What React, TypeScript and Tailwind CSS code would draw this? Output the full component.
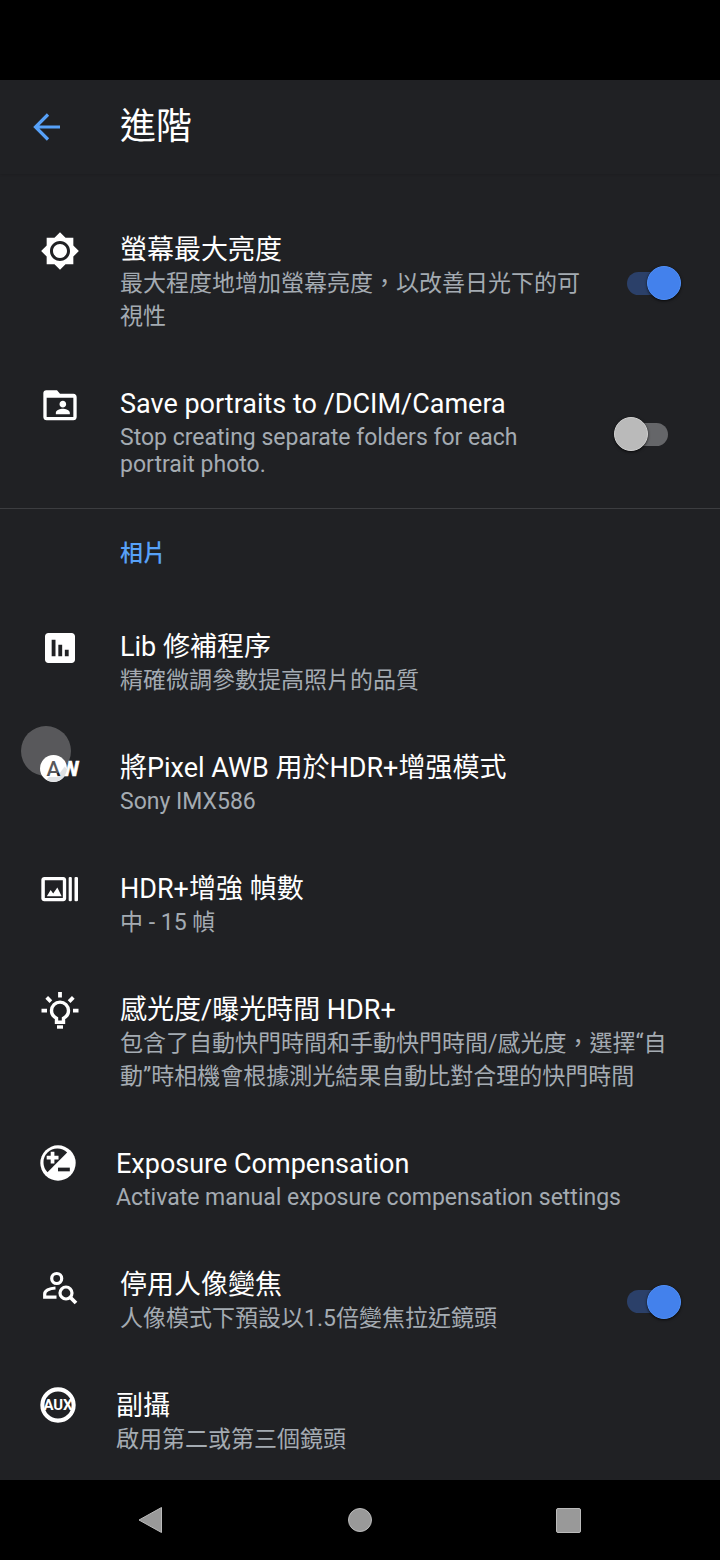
import { useState } from "react";
import type { ReactNode } from "react";
import clsx from "clsx";

type Setting = {
  id: string;
  title: string;
  summary: string;
  icon: ReactNode;
  latin?: boolean;
  toggle?: boolean;
};

function Glyph({ d }: { d: string }) {
  return (
    <svg viewBox="0 0 24 24" className="size-10 fill-white" aria-hidden="true">
      <path d={d} />
    </svg>
  );
}

function AwIcon() {
  return (
    <svg viewBox="0 0 40 40" className="size-10" fontFamily="Roboto, sans-serif" fontWeight="700" aria-hidden="true">
      <text x="21" y="27" fontSize="21" fill="#fff" stroke="#fff" strokeWidth="0.6">
        W
      </text>
      <circle cx="13.5" cy="19.5" r="13.5" fill="#fff" />
      <path d="M24.500 17.500 27 20a13.500 13.500 0 0 1-20.500 10.800L9 28h8z" fill="#dfe1e3" />
      <text x="13.5" y="27" fontSize="21" textAnchor="middle" fontWeight="500" fill="#202124">
        A
      </text>
    </svg>
  );
}

function ExposureIcon() {
  return (
    <svg viewBox="0 0 35 35" className="size-9" aria-hidden="true">
      <circle cx="17.5" cy="17.5" r="17.2" fill="#fff" />
      <path d="M7.300 26.400A13.200 13.200 0 0 1 26.400 7.400Z" fill="#202124" />
      <path d="M6.500 12.200H18M12.200 6.500v11.400" stroke="#fff" strokeWidth="3.600" />
      <path d="M17.500 23.800H29" stroke="#202124" strokeWidth="3.600" />
    </svg>
  );
}

function AuxIcon() {
  return (
    <svg viewBox="0 0 35 35" className="size-9" aria-hidden="true">
      <circle cx="17.5" cy="17.5" r="15.2" fill="none" stroke="#fff" strokeWidth="4" />
      <text x="17.5" y="22.6" textAnchor="middle" fontSize="14.500" fontWeight="700" fill="#fff" fontFamily="Roboto, sans-serif">
        AUX
      </text>
    </svg>
  );
}

const GENERAL: Setting[] = [
  {
    id: "brightness",
    title: "螢幕最大亮度",
    summary: "最大程度地增加螢幕亮度，以改善日光下的可視性",
    toggle: true,
    icon: (
      <Glyph d="M20 8.69V4h-4.69L12 .69 8.69 4H4v4.69L.69 12 4 15.31V20h4.69L12 23.31 15.31 20H20v-4.69L23.31 12 20 8.69zM12 18c-3.31 0-6-2.69-6-6s2.69-6 6-6 6 2.69 6 6-2.69 6-6 6zm0-10.200c-2.320 0-4.200 1.880-4.200 4.200s1.880 4.200 4.200 4.200 4.200-1.880 4.200-4.200-1.880-4.200-4.200-4.200z" />
    ),
  },
  {
    id: "portraits",
    title: "Save portraits to /DCIM/Camera",
    summary: "Stop creating separate folders for each portrait photo.",
    latin: true,
    toggle: true,
    icon: (
      <Glyph d="M20 5.300h-8l-1.800-2.100H3.700C2.700 3.200 2 4 2 5v14.200c0 1.200.8 2 2 2h16c1.200 0 2-.8 2-2V7.300c0-1.200-.8-2-2-2zm0 13.900H4V7.600h16v11.600zM13.700 13.500c1.100 0 2-.9 2-2s-.9-2-2-2-2 .9-2 2 .9 2 2 2zm4.200 4v-.9c0-1.600-2.800-2.400-4.200-2.400s-4.200.8-4.200 2.400v.9h8.400z" />
    ),
  },
];

const PHOTO: Setting[] = [
  {
    id: "lib",
    title: "Lib 修補程序",
    summary: "精確微調參數提高照片的品質",
    icon: (
      <Glyph d="M19 3H5c-1.100 0-2 .9-2 2v14c0 1.100.9 2 2 2h14c1.100 0 2-.9 2-2V5c0-1.100-.9-2-2-2zM9.300 17H7V7h2.300v10zm4 0H11v-7h2.300v7zm3.900 0h-2.300v-4h2.300v4z" />
    ),
  },
  {
    id: "awb",
    title: "將Pixel AWB 用於HDR+增强模式",
    summary: "Sony IMX586",
    latin: true,
    icon: <AwIcon />,
  },
  {
    id: "frames",
    title: "HDR+增強 幀數",
    summary: "中 - 15 幀",
    icon: (
      <Glyph d="M14 4.200H2.600C1.600 4.200.8 5 .8 5.900v11.200c0 .9.8 1.700 1.800 1.700H14c.9 0 1.700-.8 1.700-1.700V5.900c0-.9-.8-1.700-1.700-1.700zm-.3 12.600H2.900V6.200h10.800v10.600zM18 4.200h.4q.7 0 .7.6v13.400q0 .6-.7.6H18q-.8 0-.8-.6V4.800q0-.6.8-.6zm3.400 0h.6q.8 0 .8.6v13.400q0 .6-.8.6h-.6q-.7 0-.7-.6V4.800q0-.6.7-.6zM4.100 15.700l2.300-3.700 1.500 2.100 2.500-3.600L13 15.700H4.100z" />
    ),
  },
  {
    id: "iso",
    title: "感光度/曝光時間 HDR+",
    summary: "包含了自動快門時間和手動快門時間/感光度，選擇“自動”時相機會根據測光結果自動比對合理的快門時間",
    icon: (
      <svg viewBox="0 0 40 40" className="size-10" fill="none" stroke="#fff" strokeWidth="3.400" aria-hidden="true">
        <path d="M16.500 31.300V27.200C13.300 25.600 11.500 23.200 11.500 19.600a8.500 8.500 0 0 1 17 0c0 3.600-1.800 6-5 7.600v4.100z" />
        <path d="M17 36h6" strokeWidth="3.400" />
        <path d="M20 1v5.500M1.500 19.600H7M33 19.600h5.500M6.700 6.400l4.200 4.200M33.300 6.400l-4.200 4.200" strokeWidth="3.800" />
      </svg>
    ),
  },
  {
    id: "exposure",
    title: "Exposure Compensation",
    summary: "Activate manual exposure compensation settings",
    latin: true,
    icon: <ExposureIcon />,
  },
  {
    id: "zoom",
    title: "停用人像變焦",
    summary: "人像模式下預設以1.5倍變焦拉近鏡頭",
    toggle: true,
    icon: (
      <svg viewBox="0 0 40 40" className="size-10" fill="none" stroke="#fff" strokeWidth="3.200" aria-hidden="true">
        <circle cx="16.700" cy="12.500" r="5" />
        <path d="M15.500 22C9 22.300 4.700 25 4.700 28v3.200H16.500" />
        <circle cx="26" cy="27" r="6" />
        <path d="m30.500 31.500 5.500 5.500" strokeWidth="3.800" />
      </svg>
    ),
  },
  {
    id: "aux",
    title: "副攝",
    summary: "啟用第二或第三個鏡頭",
    icon: <AuxIcon />,
  },
];

function Switch({ id, on, onChange }: { id: string; on: boolean; onChange: () => void }) {
  return (
    <span className="relative ml-5 flex w-[67px] shrink-0 items-center justify-center self-center">
      <input
        id={id}
        type="checkbox"
        role="switch"
        checked={on}
        onChange={onChange}
        className="peer h-[23px] w-[41px] appearance-none rounded-full bg-[#656669] checked:bg-[#2b4069]"
      />
      <span className="pointer-events-none absolute left-0 size-[34px] rounded-full border border-[#d0d0d0] bg-[#bababa] shadow-sm shadow-black/60 peer-checked:right-0 peer-checked:left-auto peer-checked:border-[#4f8ff8] peer-checked:bg-[#4381ec]" />
    </span>
  );
}

function Row({ item, on, onToggle }: { item: Setting; on: boolean; onToggle: () => void }) {
  return (
    <li className="flex items-start py-[27px] pr-[39px] pl-10">
      <span className="-my-0.5 mr-10 shrink-0">{item.icon}</span>
      <div className="min-w-0 flex-1">
        {item.toggle ? (
          <label htmlFor={item.id} className="block text-[27px] leading-[34px] text-white">
            {item.title}
          </label>
        ) : (
          <h3 className="text-[27px] leading-[34px] text-white">{item.title}</h3>
        )}
        <p className={clsx("text-[23px] text-[#a4abb2]", item.latin ? "py-[3px] leading-[27px]" : "leading-[33px]")}>
          {item.summary}
        </p>
      </div>
      {item.toggle && <Switch id={item.id} on={on} onChange={onToggle} />}
    </li>
  );
}

export default function App() {
  const [enabled, setEnabled] = useState<Record<string, boolean>>({
    brightness: true,
    portraits: false,
    zoom: true,
  });

  const toggle = (id: string) => setEnabled((prev) => ({ ...prev, [id]: !prev[id] }));

  const renderRow = (item: Setting) => (
    <Row key={item.id} item={item} on={!!enabled[item.id]} onToggle={() => toggle(item.id)} />
  );

  return (
    <div
      lang="zh-TW"
      className="relative flex h-screen flex-col bg-[#202124] font-['Roboto','Noto_Sans_CJK_TC',sans-serif]"
    >
      {/* Status bar */}
      <div className="h-20 shrink-0 bg-black" />

      <header className="flex h-[94px] shrink-0 items-center px-7 shadow-xs shadow-black/10">
        <button type="button" aria-label="返回" className="mr-[52px]">
          <svg viewBox="0 0 40 40" className="size-10" fill="none" stroke="#57a1f8" strokeWidth="3.200" aria-hidden="true">
            <path d="M32 20H8M20 7.500 7.500 20 20 32.500" />
          </svg>
        </button>
        <h1 className="text-4xl text-white">進階</h1>
      </header>

      <main className="min-h-0 flex-1 overflow-y-auto [scrollbar-width:none]">
        <ul className="border-b border-[#3c3d40] pt-8">{GENERAL.map(renderRow)}</ul>
        <h2 className="pt-7 pb-8 pl-[120px] text-[23px] leading-[34px] font-medium text-[#57a1f8]">相片</h2>
        <ul>{PHOTO.map(renderRow)}</ul>
      </main>

      {/* Navigation bar */}
      <nav className="grid h-20 shrink-0 grid-cols-3 items-center bg-black px-12">
        <button type="button" aria-label="Back" className="justify-self-center">
          <svg viewBox="0 0 28 28" className="size-7" aria-hidden="true">
            <path d="M1 14 23.500 1.500v25z" fill="#999" stroke="#bbb" strokeLinejoin="round" />
          </svg>
        </button>
        <button type="button" aria-label="Home" className="size-6 justify-self-center rounded-full border border-[#bbb] bg-[#999]" />
        <button type="button" aria-label="Recents" className="size-[25px] justify-self-center rounded-xs border border-[#bbb] bg-[#999]" />
      </nav>

      {/* Floating touch dot */}
      <div className="pointer-events-none absolute top-[726px] left-[21px] size-[50px] rounded-full bg-white/25" />
    </div>
  );
}
